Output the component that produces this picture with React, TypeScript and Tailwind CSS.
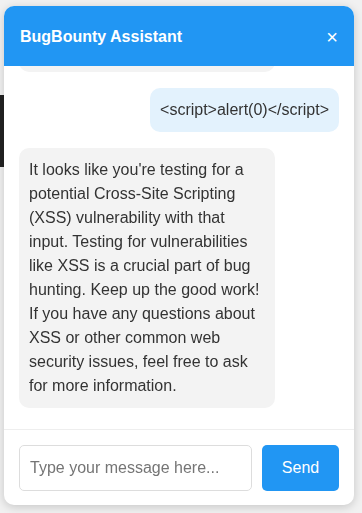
import React from "react";

export default function App() {
  const font = { fontFamily: '"Liberation Sans", Arial, sans-serif' };
  return (
    <div className="relative w-[362px] h-[513px] overflow-hidden bg-[#f1f1f1]" style={font}>
      <div className="pt-[95px]">
        <div className="w-[80px] h-[72px] bg-[#222222]" />
      </div>
      <div className="fixed right-[8px] bottom-[8px] w-[350px] h-[499px] bg-white rounded-[10px] shadow-[0_2px_10px_rgba(0,0,0,0.18)] flex flex-col overflow-hidden">
        <div className="h-[60px] shrink-0 bg-[#2196f3] flex items-center justify-between pl-[16px] pr-[16px] pt-[1px] text-white">
          <span className="text-[16px] font-bold">BugBounty Assistant</span>
          <span className="text-[20px] leading-none">×</span>
        </div>
        <div className="flex-1 min-h-0 overflow-hidden flex flex-col justify-end gap-[16px] px-[15px] pb-[21px] text-[16px] leading-[24px] text-[#333333]">
          <div className="self-start max-w-[256px] w-[256px] bg-[#f3f3f3] rounded-[10px] px-[10px] py-[10px] shrink-0">
            Hello! I'm your BugBounty Assistant. How can I help you today?
          </div>
          <div className="self-end max-w-[256px] bg-[#e3f2fd] rounded-[10px] px-[10px] py-[10px] shrink-0">
            {"<script>alert(0)</script>"}
          </div>
          <div className="self-start max-w-[256px] bg-[#f3f3f3] rounded-[10px] px-[10px] py-[10px] shrink-0">
            It looks like you're testing for a potential Cross-Site Scripting (XSS) vulnerability with that input. Testing for vulnerabilities like XSS is a crucial part of bug hunting. Keep up the good work! If you have any questions about XSS or other common web security issues, feel free to ask for more information.
          </div>
        </div>
        <div className="shrink-0 border-t border-[#eeeeee] pt-[15px] pb-[14px] px-[15px] flex gap-[10px]">
          <input
            autoFocus
            className="flex-1 min-w-0 h-[46px] border border-[#dddddd] rounded-[5px] px-[10px] text-[16px] text-[#333333] placeholder:text-[#757575] outline-none"
            placeholder="Type your message here..."
            style={font}
          />
          <button
            className="w-[77px] h-[46px] bg-[#2196f3] text-white rounded-[5px] text-[16px]"
            style={font}
          >
            Send
          </button>
        </div>
      </div>
    </div>
  );
}
